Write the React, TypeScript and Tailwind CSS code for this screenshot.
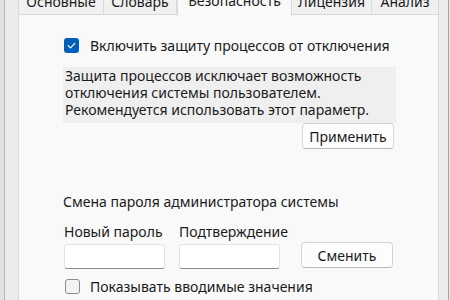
import React, { useState } from 'react';

const tabs = [
  { label: 'Основные', w: 'w-[86px]' },
  { label: 'Словарь', w: 'w-[73px]' },
  { label: 'Безопасность', w: 'w-[115px]', active: true },
  { label: 'Лицензия', w: 'w-[80px]' },
  { label: 'Анализ', w: 'w-[67px]' },
];

const CheckBox: React.FC<{ checked: boolean; onChange: () => void }> = ({ checked, onChange }) => (
  <button
    onClick={onChange}
    className={
      checked
        ? 'w-[15px] h-[15px] rounded-[3px] bg-[#005fb8] flex items-center justify-center shrink-0'
        : 'w-[15px] h-[15px] rounded-[3px] border border-[#8b8b8b] bg-[#f3f3f3] shrink-0'
    }
  >
    {checked && (
      <svg width="11" height="11" viewBox="0 0 12 12" fill="none">
        <path d="M2.5 6.3 L5 8.6 L9.6 3.6" stroke="white" strokeWidth="1.3" strokeLinecap="round" strokeLinejoin="round" />
      </svg>
    )}
  </button>
);

const App: React.FC = () => {
  const [protect, setProtect] = useState(true);
  const [showValues, setShowValues] = useState(false);
  const [pwd, setPwd] = useState('');
  const [confirm, setConfirm] = useState('');

  return (
    <div
      className="w-[450px] h-[300px] overflow-hidden flex bg-[#f0f0f0] text-[14px] leading-[17px] text-[#1b1b1b]"
      style={{ fontFamily: '"Noto Sans", "Open Sans", sans-serif' }}
    >
      {/* left edge */}
      <div className="w-[18px] flex shrink-0">
        <div className="w-[4px] bg-[#e2e2e2]" />
        <div className="w-px bg-[#b4b4b4]" />
        <div className="flex-1 bg-[#ececec]" />
      </div>

      {/* tab control */}
      <div className="w-[421px] flex flex-col shrink-0">
        <div className="h-[15px] flex items-end">
          {tabs.map((t) => (
            <div
              key={t.label}
              className={
                t.active
                  ? `${t.w} h-[16px] bg-[#f9f9f9] border-x border-[#d9d9d9] flex justify-center items-end pb-[7px] relative z-10 -mb-px`
                  : `${t.w} h-[15px] bg-[#f0f0f0] border-r border-b border-[#d9d9d9] first:border-l flex justify-center items-end pb-[4px]`
              }
            >
              <span className="whitespace-nowrap">{t.label}</span>
            </div>
          ))}
          <div className="flex-1 h-[15px] border-b border-[#d9d9d9]" />
        </div>

        <div className="flex-1 bg-[#f9f9f9] border-x border-[#d9d9d9] pl-[44px] pt-[23px]">
          <div className="w-[333px] flex flex-col">
            <div className="h-[15px] flex items-center gap-[11px] pl-px">
              <CheckBox checked={protect} onChange={() => setProtect(!protect)} />
              <span className="whitespace-nowrap">Включить защиту процессов от отключения</span>
            </div>

            <div className="mt-[14px] h-[56px] bg-[#efefef] pl-[2px]">
              <p>Защита процессов исключает возможность</p>
              <p>отключения системы пользователем.</p>
              <p>Рекомендуется использовать этот параметр.</p>
            </div>

            <div className="flex justify-end pr-[2px]">
              <button className="w-[92px] h-[26px] bg-[#fdfdfd] border border-[#d5d5d5] border-b-[#b8b8b8] rounded-[4px]">
                Применить
              </button>
            </div>

            <p className="mt-[44px]">Смена пароля администратора системы</p>

            <div className="mt-[13px] flex items-end">
              <div className="w-[102px] flex flex-col gap-[4px] pl-px">
                <span>Новый пароль</span>
                <input
                  type="password"
                  value={pwd}
                  onChange={(e) => setPwd(e.target.value)}
                  className="w-[101px] h-[25px] bg-white border border-[#e3e3e3] border-b-[#8a8a8a] rounded-[3px] outline-none px-1"
                />
              </div>
              <div className="ml-[14px] w-[102px] flex flex-col gap-[4px]">
                <span>Подтверждение</span>
                <input
                  type="password"
                  value={confirm}
                  onChange={(e) => setConfirm(e.target.value)}
                  className="w-[101px] h-[25px] bg-white border border-[#e3e3e3] border-b-[#8a8a8a] rounded-[3px] outline-none px-1"
                />
              </div>
              <button className="ml-[20px] mb-px w-[92px] h-[26px] bg-[#fdfdfd] border border-[#d5d5d5] border-b-[#b8b8b8] rounded-[4px]">
                Сменить
              </button>
            </div>

            <div className="mt-[10px] h-[15px] flex items-center gap-[10px] pl-[2px]">
              <CheckBox checked={showValues} onChange={() => setShowValues(!showValues)} />
              <span className="whitespace-nowrap">Показывать вводимые значения</span>
            </div>
          </div>
        </div>
      </div>

      {/* right edge */}
      <div className="flex-1 flex">
        <div className="flex-1 bg-[#ececec]" />
        <div className="w-px bg-[#a6a6a6]" />
        <div className="w-px bg-[#e8e8e8]" />
      </div>
    </div>
  );
};

export default App;
